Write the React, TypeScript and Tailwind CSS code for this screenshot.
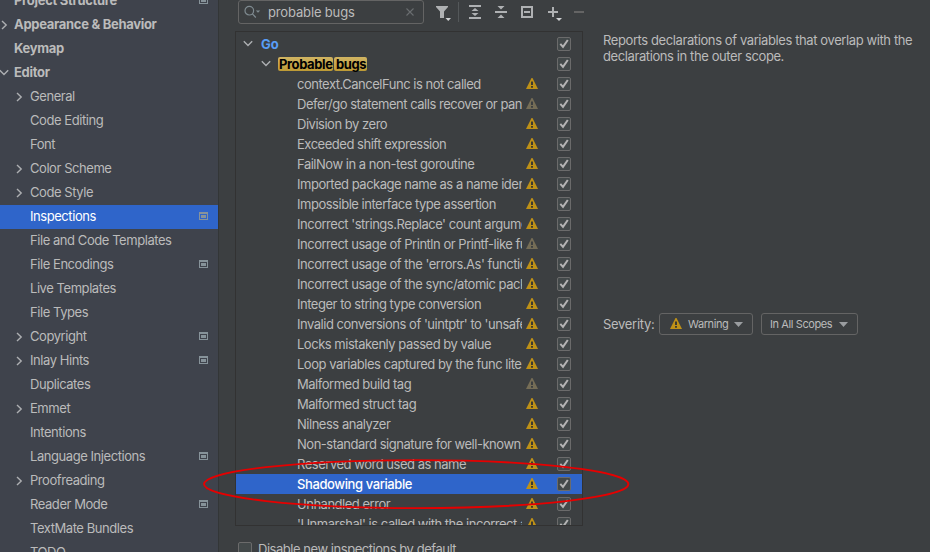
import React from "react";

type NavItem = { label: string; level: 0 | 1; arrow?: "right" | "down"; badge?: boolean; selected?: boolean };

const nav: NavItem[] = [
  { label: "Project Structure", level: 0, badge: true },
  { label: "Appearance & Behavior", level: 0, arrow: "right" },
  { label: "Keymap", level: 0 },
  { label: "Editor", level: 0, arrow: "down" },
  { label: "General", level: 1, arrow: "right" },
  { label: "Code Editing", level: 1 },
  { label: "Font", level: 1 },
  { label: "Color Scheme", level: 1, arrow: "right" },
  { label: "Code Style", level: 1, arrow: "right" },
  { label: "Inspections", level: 1, badge: true, selected: true },
  { label: "File and Code Templates", level: 1 },
  { label: "File Encodings", level: 1, badge: true },
  { label: "Live Templates", level: 1 },
  { label: "File Types", level: 1 },
  { label: "Copyright", level: 1, arrow: "right", badge: true },
  { label: "Inlay Hints", level: 1, arrow: "right", badge: true },
  { label: "Duplicates", level: 1 },
  { label: "Emmet", level: 1, arrow: "right" },
  { label: "Intentions", level: 1 },
  { label: "Language Injections", level: 1, badge: true },
  { label: "Proofreading", level: 1, arrow: "right" },
  { label: "Reader Mode", level: 1, badge: true },
  { label: "TextMate Bundles", level: 1 },
  { label: "TODO", level: 1 },
];

type Inspection = { label: string; weak?: boolean; selected?: boolean };

const inspections: Inspection[] = [
  { label: "context.CancelFunc is not called" },
  { label: "Defer/go statement calls recover or panic", weak: true },
  { label: "Division by zero" },
  { label: "Exceeded shift expression" },
  { label: "FailNow in a non-test goroutine" },
  { label: "Imported package name as a name identifier" },
  { label: "Impossible interface type assertion" },
  { label: "Incorrect 'strings.Replace' count argument" },
  { label: "Incorrect usage of Println or Printf-like function", weak: true },
  { label: "Incorrect usage of the 'errors.As' function" },
  { label: "Incorrect usage of the sync/atomic package" },
  { label: "Integer to string type conversion" },
  { label: "Invalid conversions of 'uintptr' to 'unsafe.Pointer'" },
  { label: "Locks mistakenly passed by value" },
  { label: "Loop variables captured by the func literal" },
  { label: "Malformed build tag", weak: true },
  { label: "Malformed struct tag" },
  { label: "Nilness analyzer" },
  { label: "Non-standard signature for well-known methods" },
  { label: "Reserved word used as name" },
  { label: "Shadowing variable", selected: true },
  { label: "Unhandled error" },
  { label: "'Unmarshal' is called with the incorrect argument" },
];

function Chevron({ dir }: { dir: "right" | "down" }) {
  return (
    <svg width="10" height="10" viewBox="0 0 10 10" fill="none" stroke="#adafb2" strokeWidth="1.4" className="shrink-0">
      <path d={dir === "right" ? "M3 1 7.200 5 3 9" : "M.8 2.300 5 6.500 9.200 2.300"} />
    </svg>
  );
}

function ProjectBadge() {
  return (
    <svg width="9" height="8" viewBox="0 0 9 8" shapeRendering="crispEdges" className="shrink-0">
      <path fill="#87939a" fillRule="evenodd" d="M0 0h9v8H0zM1 2v5h7V2z" />
      <path fill="#87939a" d="M2 3h5v3H2z" />
    </svg>
  );
}

function Warn({ weak }: { weak?: boolean }) {
  return (
    <svg width="12" height="11" viewBox="0 0 12 11" className="-mt-px shrink-0">
      <path fill={weak ? "#756d56" : "#be9117"} d="M5.500 0h1L12 11H0z" />
      <path fill={weak ? "#3c3f41" : "#3c3a2e"} d="M5 3.500h2v3.500H5zM5 8h2v1.800H5z" />
    </svg>
  );
}

function Check({ checked = true }: { checked?: boolean }) {
  return (
    <span className="block size-[14px] shrink-0 rounded-[2px] border border-[#6b6b6b] bg-[#43494a]">
      {checked && (
        <svg width="12" height="12" viewBox="0 0 12 12" fill="none" stroke="#b4b4b4" strokeWidth="2">
          <path d="M2.300 5.800 5 8.800 9.800 2" />
        </svg>
      )}
    </span>
  );
}

function Sidebar() {
  return (
    <nav className="flex w-[219px] shrink-0 flex-col border-r border-[#333637] bg-[#3f434c]">
      <div className="-mt-[11px]">
        {nav.map((n) => (
          <div
            key={n.label}
            className={`flex h-6 items-center pb-px ${n.selected ? "bg-[#2f65ca] text-white" : ""} ${n.level === 0 ? "-ml-[1px] font-bold tracking-[-0.3px]" : "pl-[14px] tracking-[-0.44px]"}`}
          >
            <span className={`flex shrink-0 ${n.level === 0 ? "w-[15px]" : "w-4"}`}>{n.arrow && <Chevron dir={n.arrow} />}</span>
            <span className="-mt-px flex-1 whitespace-nowrap">{n.label}</span>
            {n.badge && (
              <span className="mr-[10px] -mt-px">
                <ProjectBadge />
              </span>
            )}
          </div>
        ))}
      </div>
    </nav>
  );
}

function Toolbar() {
  return (
    <div className="flex h-6 items-center">
      <div className="ml-[3px] flex h-6 w-[186px] shrink-0 items-center rounded-[3px] border border-[#646464] bg-[#3c3f41] pl-[5px] pr-[9px] text-[13px]">
        <svg width="17" height="14" viewBox="0 0 17 14" fill="none" stroke="#7f8b91" strokeWidth="1.2">
          <circle cx="5.3" cy="5.7" r="4.3" />
          <path d="m8.4 8.8 3.4 3.7" />
          <path d="M11.800 5.400h4.400L14 7.800z" fill="#7f8b91" stroke="none" />
        </svg>
        <span className="ml-[7px] flex-1 tracking-[-0.15px]">probable bugs</span>
        <svg width="8" height="8" viewBox="0 0 8 8" stroke="#6a6e70" strokeWidth="1.1">
          <path d="m.5.5 7 7m0-7-7 7" />
        </svg>
      </div>
      <svg width="170" height="24" viewBox="0 0 170 24" className="shrink-0" fill="#afb1b3">
        <path d="M12 6h12v1l-4 4.500V18h-4v-6.500L12 7z" />
        <path d="M21.500 18h5.500l-2.750 3z" fill="#d0d2d4" />
        <path d="M34 2h1v20h-1z" fill="#54585a" />
        <path d="M45 5h12v2H45zM45 17h12v2H45zM51 8l3.500 3h-7zM51 16l3.500-3h-7z" />
        <path d="M71 11h12v2H71zM77 9.500 80.500 6h-7zM77 14.500l3.500 3.500h-7z" />
        <path fillRule="evenodd" d="M97 6h12v12H97zM99 8v8h8V8z" />
        <path d="M100 11h6v2h-6z" />
        <path d="M128 7h2v4h4v2h-4v4h-2v-4h-4v-2h4z" />
        <path d="M132 18h6l-3 3z" fill="#d0d2d4" />
        <path d="M150 11h10v2h-10z" fill="#646464" />
      </svg>
    </div>
  );
}

function Tree() {
  return (
    <div className="mt-[7px] h-[495px] w-[348px] overflow-hidden border border-[#323232] pt-[2px]">
      <div className="flex h-5 items-center pl-[7px] pr-[11px] font-bold text-[#589df6]">
        <Chevron dir="down" />
        <span className="ml-2 flex-1">Go</span>
        <Check />
      </div>
      <div className="flex h-5 items-center pl-[25px] pr-[11px] font-bold tracking-[-0.4px] text-black">
        <Chevron dir="down" />
        <span className="ml-[7px] flex flex-1 gap-px leading-[14px]">
          <span className="w-[55px] rounded-[2px] bg-gradient-to-b from-[#d0b462] to-[#bd9a35] pl-px">Probable</span>
          <span className="w-[33px] rounded-[2px] bg-gradient-to-b from-[#d0b462] to-[#bd9a35] pl-[2px]">bugs</span>
        </span>
        <Check />
      </div>
      {inspections.map((i) => (
        <div key={i.label} className={`flex h-5 items-center pl-[61px] pr-[11px] ${i.selected ? "bg-[#2f65ca] font-medium tracking-[-0.4px] text-white" : "tracking-[-0.48px]"}`}>
          <span className="w-[225px] shrink-0 overflow-hidden whitespace-nowrap">{i.label}</span>
          <span className="ml-1 flex-1">
            <Warn weak={i.weak} />
          </span>
          <Check />
        </div>
      ))}
    </div>
  );
}

function Dropdown({ children, className }: { children: React.ReactNode; className: string }) {
  return (
    <div className={`flex h-[22px] items-center rounded-[3px] border border-[#646464] text-[11px] tracking-[-0.4px] ${className}`}>
      {children}
      <svg width="9" height="5" viewBox="0 0 9 5" className="ml-auto mr-[9px] shrink-0">
        <path d="M0 0h9L4.500 5z" fill="#9a9da0" />
      </svg>
    </div>
  );
}

export default function App() {
  return (
    <div className="relative flex h-[552px] w-[930px] overflow-hidden bg-[#3c3f41] font-['Inter',sans-serif] text-[13px] leading-4 text-[#bbbbbb]">
      <Sidebar />
      <section className="ml-4 w-[368px] shrink-0">
        <Toolbar />
        <Tree />
        <div className="ml-[3px] mt-[15px] flex items-center gap-[6px] whitespace-nowrap tracking-[-0.46px]">
          <Check checked={false} />
          <span>Disable new inspections by default</span>
        </div>
      </section>
      <section className="flex-1 pt-8">
        <p className="whitespace-nowrap tracking-[-0.4px]">
          Reports declarations of variables that overlap with the
          <br />
          declarations in the outer scope.
        </p>
        <div className="mt-[249px] flex items-center">
          <span className="w-14 tracking-[-0.3px]">Severity:</span>
          <Dropdown className="w-[94px] pl-[10px]">
            <Warn />
            <span className="ml-[6px]">Warning</span>
          </Dropdown>
          <Dropdown className="ml-2 w-[97px] pl-2">
            <span className="whitespace-nowrap">In All Scopes</span>
          </Dropdown>
        </div>
      </section>
      <svg width="430" height="54" viewBox="0 0 430 54" className="pointer-events-none absolute left-[202px] top-[457px]" fill="none" stroke="#e60000" strokeWidth="1.9">
        <ellipse cx="214.200" cy="27.100" rx="212.200" ry="24" />
      </svg>
    </div>
  );
}
